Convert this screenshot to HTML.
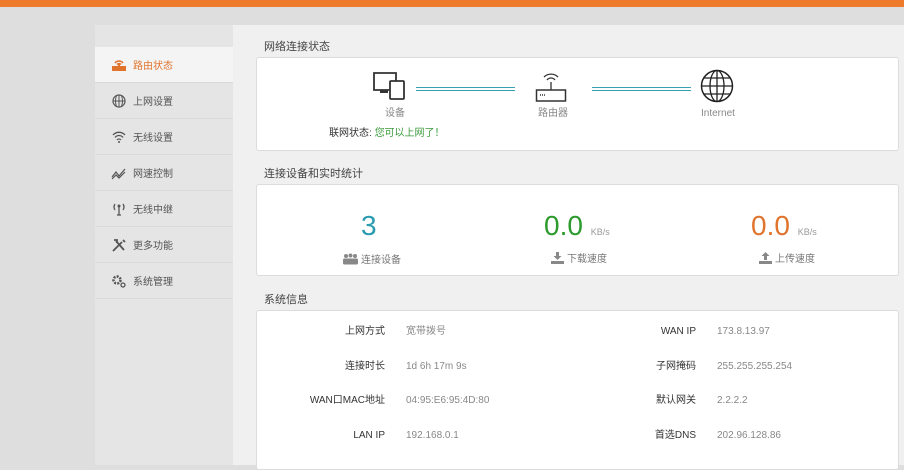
<!DOCTYPE html>
<html><head><meta charset="utf-8"><style>
*{margin:0;padding:0;box-sizing:border-box}
body{width:904px;height:457px;overflow:hidden;background:#dedede;font-family:"Liberation Sans","Noto Sans CJK SC",sans-serif;position:relative;color:#333}
.top{position:absolute;left:0;top:0;width:904px;height:7px;background:#ee7a2b}
.side{position:absolute;left:95px;top:25px;width:138px;height:440px;background:#e5e5e5}
.item{position:absolute;left:0;width:138px;height:36px;border-bottom:1px solid #dadada;font-size:10px;color:#555;line-height:40px;padding-left:38px}
.item.act{background:#f4f4f4;color:#e0742c}
.ic{position:absolute;left:16px;top:11px;width:16px;height:14px}
.main{position:absolute;left:233px;top:25px;width:671px;height:440px;background:#f0f0f0}
.h{position:absolute;left:264px;font-size:11px;color:#444;line-height:12px}
.card{position:absolute;left:256px;width:643px;background:#fff;border:1px solid #dcdcdc;border-radius:3px}
.lbl{position:absolute;font-size:10px;color:#888;line-height:12px}
.big{position:absolute;font-size:28px;font-family:"Liberation Sans",sans-serif;line-height:30px}
.kb{font-size:9px;color:#999}
.r{position:absolute;font-size:10px;color:#333;text-align:right;line-height:12px}
.v{position:absolute;font-size:10px;color:#888;line-height:12px}
.line{position:absolute;height:4px;border-top:1px solid #3a9fb0;border-bottom:1px solid #3a9fb0}
.si{display:inline-block;vertical-align:-2px;margin-right:3px}
</style></head><body>
<div class="top"></div>
<div class="side">
<div class="item act" style="top:22px;height:36px">
<svg class="ic" viewBox="0 0 16 14"><path d="M4 5a5 5 0 0 1 8 0M6 6.5a2.5 2.5 0 0 1 4 0" stroke="#e0742c" fill="none" stroke-width="1.5"/><rect x="1" y="8" width="14" height="5" fill="#e0742c"/><rect x="7" y="6" width="2" height="2" fill="#e0742c"/></svg>路由状态</div>
<div class="item" style="top:58px"><svg class="ic" viewBox="0 0 16 14"><circle cx="8" cy="7" r="6" fill="none" stroke="#555" stroke-width="1.2"/><path d="M2 7h12M8 1v12M5.5 1.5q-2 5.5 0 11M10.5 1.5q2 5.5 0 11" stroke="#555" fill="none"/></svg>上网设置</div>
<div class="item" style="top:94px"><svg class="ic" viewBox="0 0 16 14"><path d="M2 5a8 8 0 0 1 12 0M4 7.5a5 5 0 0 1 8 0M6 10a2.5 2.5 0 0 1 4 0" stroke="#555" fill="none" stroke-width="1.3"/><circle cx="8" cy="12" r="1" fill="#555"/></svg>无线设置</div>
<div class="item" style="top:130px"><svg class="ic" viewBox="0 0 16 14"><path d="M1 11l4-5 3 4 6-7M1 13l4-4 3 3 6-6" stroke="#555" fill="none" stroke-width="1.2"/></svg>网速控制</div>
<div class="item" style="top:166px"><svg class="ic" viewBox="0 0 16 14"><path d="M8 5v8M6 13h4M4 2q-2 3 0 6M12 2q2 3 0 6" stroke="#555" fill="none" stroke-width="1.3"/><circle cx="8" cy="4" r="1.5" fill="#555"/></svg>无线中继</div>
<div class="item" style="top:202px"><svg class="ic" viewBox="0 0 16 14"><path d="M2 13l9-9M5 3l8 9M3 2l3 0 0 3M12 2l2 2" stroke="#555" fill="none" stroke-width="1.8"/></svg>更多功能</div>
<div class="item" style="top:238px"><svg class="ic" viewBox="0 0 16 14"><circle cx="6" cy="6" r="3.5" fill="none" stroke="#555" stroke-width="2.5" stroke-dasharray="2 1.2"/><circle cx="12" cy="11" r="2" fill="none" stroke="#555" stroke-width="1.3"/></svg>系统管理</div>
</div>
<div class="main"></div>
<div class="h" style="top:41px">网络连接状态</div>
<div class="card" style="top:57px;height:94px"></div>
<svg style="position:absolute;left:372px;top:71px" width="34" height="30" viewBox="0 0 34 30"><path d="M2 2h22v17H2z" fill="none" stroke="#333" stroke-width="1.8"/><rect x="8" y="19" width="8" height="3" fill="#333"/><rect x="18" y="10" width="14" height="18" fill="#fff" stroke="#333" stroke-width="1.8" rx="1"/></svg>
<div class="line" style="left:416px;top:87px;width:99px"></div>
<svg style="position:absolute;left:535px;top:70px" width="32" height="33" viewBox="0 0 32 33"><path d="M9 7a10 10 0 0 1 14 0M12 10a5 5 0 0 1 8 0" stroke="#333" fill="none" stroke-width="1.3"/><path d="M16 12v8" stroke="#333" stroke-width="1.3"/><rect x="1.5" y="20" width="29" height="11" fill="none" stroke="#333" stroke-width="1.5"/><path d="M5 25h5" stroke="#333" stroke-width="1.5" stroke-dasharray="1 1"/></svg>
<div class="line" style="left:592px;top:87px;width:99px"></div>
<svg style="position:absolute;left:700px;top:69px" width="34" height="34" viewBox="0 0 34 34"><circle cx="17" cy="17" r="15.5" fill="none" stroke="#222" stroke-width="1.5"/><ellipse cx="17" cy="17" rx="7" ry="15.5" fill="none" stroke="#222" stroke-width="1.3"/><path d="M17 1.5v31M1.5 17h31M4 9h26M4 25h26" stroke="#222" stroke-width="1.3"/></svg>
<div class="lbl" style="left:385px;top:108px">设备</div>
<div class="lbl" style="left:538px;top:108px">路由器</div>
<div class="lbl" style="left:701px;top:108px">Internet</div>
<div style="position:absolute;left:329px;top:128px;font-size:10px;color:#333;line-height:12px">联网状态: <span style="color:#3a9a3a">您可以上网了！</span></div>
<div class="h" style="top:168px">连接设备和实时统计</div>
<div class="card" style="top:184px;height:92px"></div>
<div class="big" style="left:361px;top:211px;color:#2a9bb0">3</div>
<div class="big" style="left:544px;top:211px;color:#2c9a2c">0.0 <span class="kb">KB/s</span></div>
<div class="big" style="left:751px;top:211px;color:#e0742c">0.0 <span class="kb">KB/s</span></div>
<div class="lbl" style="left:343px;top:253px;color:#777"><svg class="si" width="15" height="12" viewBox="0 0 15 12"><circle cx="3" cy="3" r="2" fill="#888"/><circle cx="7.5" cy="2.5" r="2" fill="#888"/><circle cx="12" cy="3" r="2" fill="#888"/><rect x="0" y="5.5" width="15" height="6" rx="1.5" fill="#888"/></svg>连接设备</div>
<div class="lbl" style="left:551px;top:252px;color:#777"><svg class="si" width="13" height="12" viewBox="0 0 13 12"><path d="M5 0h3v4h2.5L6.5 8 2.5 4H5z" fill="#888"/><rect x="0" y="9" width="13" height="3" fill="#888"/></svg>下载速度</div>
<div class="lbl" style="left:759px;top:252px;color:#777"><svg class="si" width="13" height="12" viewBox="0 0 13 12"><path d="M5 8h3V4h2.5L6.5 0 2.5 4H5z" fill="#888"/><rect x="0" y="9" width="13" height="3" fill="#888"/></svg>上传速度</div>
<div class="h" style="top:294px">系统信息</div>
<div class="card" style="top:310px;height:160px"></div>
<div class="r" style="left:300px;width:85px;top:326px">上网方式</div><div class="v" style="left:406px;top:326px">宽带拨号</div>
<div class="r" style="left:300px;width:85px;top:361px">连接时长</div><div class="v" style="left:406px;top:361px">1d 6h 17m 9s</div>
<div class="r" style="left:290px;width:95px;top:395px">WAN口MAC地址</div><div class="v" style="left:406px;top:395px">04:95:E6:95:4D:80</div>
<div class="r" style="left:300px;width:85px;top:430px">LAN IP</div><div class="v" style="left:406px;top:430px">192.168.0.1</div>
<div class="r" style="left:610px;width:86px;top:326px">WAN IP</div><div class="v" style="left:717px;top:326px">173.8.13.97</div>
<div class="r" style="left:610px;width:86px;top:361px">子网掩码</div><div class="v" style="left:717px;top:361px">255.255.255.254</div>
<div class="r" style="left:610px;width:86px;top:395px">默认网关</div><div class="v" style="left:717px;top:395px">2.2.2.2</div>
<div class="r" style="left:610px;width:86px;top:430px">首选DNS</div><div class="v" style="left:717px;top:430px">202.96.128.86</div>
</body></html>
